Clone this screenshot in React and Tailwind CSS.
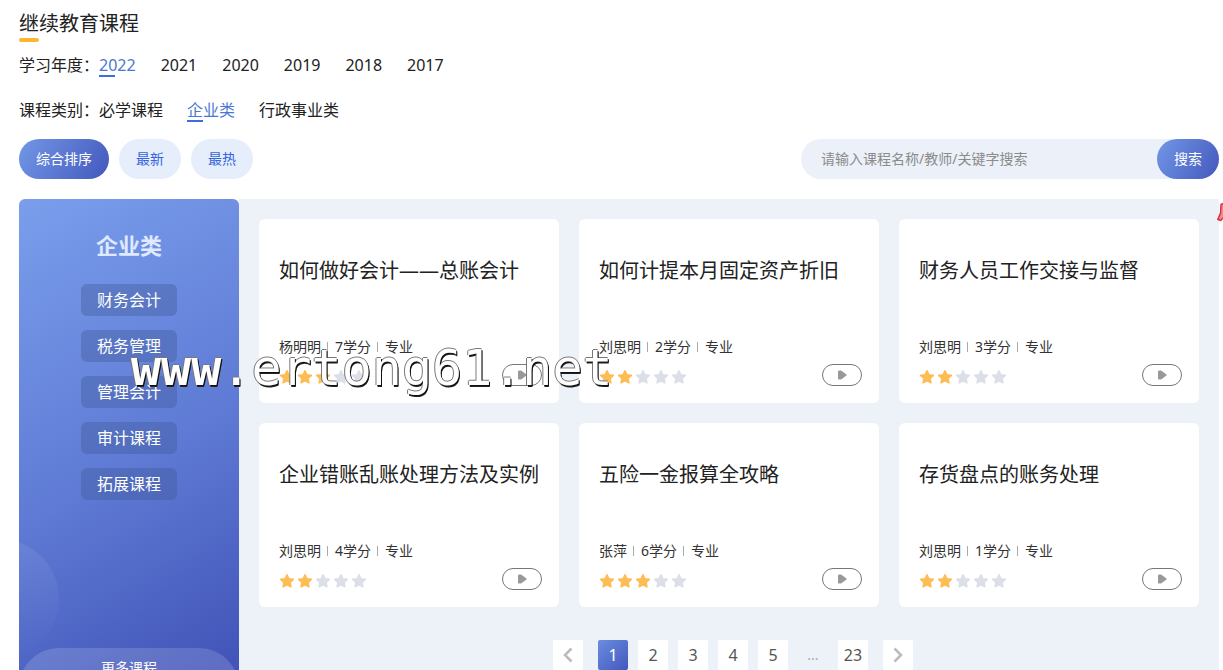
import React from "react";

const years = ["2022", "2021", "2020", "2019", "2018", "2017"];
const categories = ["必学课程", "企业类", "行政事业类"];
const sideItems = ["财务会计", "税务管理", "管理会计", "审计课程", "拓展课程"];
const courses = [
  { title: "如何做好会计——总账会计", teacher: "杨明明", credit: "7学分", stars: 3 },
  { title: "如何计提本月固定资产折旧", teacher: "刘思明", credit: "2学分", stars: 2 },
  { title: "财务人员工作交接与监督", teacher: "刘思明", credit: "3学分", stars: 2 },
  { title: "企业错账乱账处理方法及实例", teacher: "刘思明", credit: "4学分", stars: 2 },
  { title: "五险一金报算全攻略", teacher: "张萍", credit: "6学分", stars: 3 },
  { title: "存货盘点的账务处理", teacher: "刘思明", credit: "1学分", stars: 2 },
];

function Star({ on }) {
  return (
    <svg viewBox="0 0 16 16" className={on ? "size-4 text-[#fdbd55]" : "size-4 text-[#dcdfe7]"} fill="currentColor" stroke="currentColor" strokeWidth="1.6" strokeLinejoin="round" aria-hidden="true">
      <path d="M8 1.8l1.9 4 4.4.6-3.2 3 .8 4.4L8 11.7l-3.9 2.1.8-4.4-3.2-3 4.4-.6z" />
    </svg>
  );
}

function FilterRow({ label, items, active, gap }) {
  return (
    <div className="flex h-6 items-center text-base leading-6">
      <span>{label}</span>
      <nav className={gap}>
        {items.map((t) => (
          <a
            key={t}
            href="#"
            className={
              t === active
                ? "relative text-[#4a77d4] after:absolute after:bottom-0 after:left-0 after:h-0.5 after:w-4 after:bg-[#3f6de0]"
                : "relative"
            }
          >
            {t}
          </a>
        ))}
      </nav>
    </div>
  );
}

function Divider() {
  return <span className="mr-px h-2.5 w-px bg-[#aaaaaa]" />;
}

function Card({ course }) {
  return (
    <article className="flex h-46 flex-col rounded-md bg-white pt-9.5 pr-[17px] pl-5">
      <h3 className="text-xl leading-7 whitespace-nowrap">{course.title}</h3>
      <div className="mt-12.5 flex items-center gap-1.5 text-sm leading-6 text-[#333333]">
        <span>{course.teacher}</span>
        <Divider />
        <span>{course.credit}</span>
        <Divider />
        <span>专业</span>
      </div>
      <div className="mt-[5px] flex items-center justify-between">
        <div className="mt-1 flex gap-0.5">
          {[1, 2, 3, 4, 5].map((n) => (
            <Star key={n} on={n <= course.stars} />
          ))}
        </div>
        <button aria-label="播放" className="flex h-[22px] w-10 items-center justify-center rounded-full border border-[#777777]">
          <svg viewBox="0 0 10 10" className="size-2.5" fill="#999999" stroke="#999999" strokeWidth="2" strokeLinejoin="round">
            <path d="M2 1.5h1.8L8.6 5 3.8 8.5H2z" />
          </svg>
        </button>
      </div>
    </article>
  );
}

function PageButton({ children, active, label }) {
  return (
    <button
      aria-label={label}
      className={
        active
          ? "flex size-7.5 items-center justify-center rounded-xs bg-linear-135 from-[#6a8de0] to-[#4458bd] text-white"
          : "flex size-7.5 items-center justify-center rounded-xs bg-white"
      }
    >
      {children}
    </button>
  );
}

export default function App() {
  return (
    <div className="relative h-screen overflow-hidden bg-white pr-1 pl-[19px] font-['Noto_Sans','Noto_Sans_CJK_SC',sans-serif] text-[#222222]">
      <header>
        <h1 className="pt-2.5 text-xl leading-7">继续教育课程</h1>
        <div className="h-1 w-5 rounded-full bg-[#fdb62f]" />
        <div className="mt-[11px]">
          <FilterRow label="学习年度：" items={years} active="2022" gap="flex gap-[25px]" />
        </div>
        <div className="mt-[21px]">
          <FilterRow label="课程类别：" items={categories} active="企业类" gap="flex gap-6" />
        </div>
      </header>

      <div className="mt-[17px] flex h-10 items-center justify-between text-sm">
        <div className="flex gap-2.5">
          <button className="h-10 rounded-full bg-linear-120 from-[#7397e6] to-[#4458bd] px-[17px] text-white">综合排序</button>
          <button className="h-10 rounded-full bg-[#e6eefc] px-[17px] text-[#3565dd]">最新</button>
          <button className="h-10 rounded-full bg-[#e6eefc] px-[17px] text-[#3565dd]">最热</button>
        </div>
        <form className="flex h-10 w-[418px] rounded-full bg-[#ecf1f9]">
          <input
            aria-label="搜索课程"
            placeholder="请输入课程名称/教师/关键字搜索"
            className="min-w-0 flex-1 bg-transparent pl-5 outline-none placeholder:text-[#8b8b8b]"
          />
          <button type="button" className="rounded-full bg-linear-120 from-[#7397e6] to-[#4458bd] px-[17px] text-white">搜索</button>
        </form>
      </div>

      <main className="mt-5 flex h-[520px]">
        <aside className="relative flex w-55 shrink-0 flex-col items-center overflow-hidden rounded-md bg-linear-150 from-[#7a9eec] via-[#5f7bd5] via-50% to-[#4355b9] to-90% text-white">
          <span className="absolute top-[340px] -left-20 size-30 rounded-full bg-linear-to-b from-white/8 to-white/0" />
          <h2 className="mt-7 text-[22px] leading-9 font-bold text-[#dfe9ff]">企业类</h2>
          <ul className="mt-[21px] flex flex-col gap-3.5">
            {sideItems.map((t) => (
              <li key={t}>
                <a href="#" className="block h-8 rounded-md bg-[#415a9c]/40 px-4 text-base leading-8">{t}</a>
              </li>
            ))}
          </ul>
          <a href="#" className="absolute top-[449px] right-0 left-0 h-20 rounded-t-[40px] bg-white/15 pt-2 text-center text-sm leading-6">更多课程</a>
        </aside>

        <section className="min-w-0 flex-1 bg-[#edf2f9] p-5">
          <div className="grid grid-cols-3 gap-5">
            {courses.map((c) => (
              <Card key={c.title} course={c} />
            ))}
          </div>
          <nav aria-label="分页" className="mt-[33px] flex justify-center gap-2.5 pl-2 text-base text-[#555555]">
            <div className="mr-[5px]">
              <PageButton label="上一页">
                <svg viewBox="0 0 10 16" className="h-4 w-2.5" fill="none" stroke="#bbbbbb" strokeWidth="2.5"><path d="M8.5 1.5L2 8l6.5 6.5" /></svg>
              </PageButton>
            </div>
            <PageButton active>1</PageButton>
            <PageButton>2</PageButton>
            <PageButton>3</PageButton>
            <PageButton>4</PageButton>
            <PageButton>5</PageButton>
            <span className="w-7.5 text-center text-sm leading-7.5 text-[#aaaaaa]">...</span>
            <PageButton>23</PageButton>
            <div className="ml-[5px]">
              <PageButton label="下一页">
                <svg viewBox="0 0 10 16" className="h-4 w-2.5" fill="none" stroke="#bbbbbb" strokeWidth="2.5"><path d="M1.5 1.5L8 8l-6.5 6.5" /></svg>
              </PageButton>
            </div>
          </nav>
        </section>
      </main>

      <svg viewBox="0 0 6 20" className="absolute top-[202px] right-0 h-5 w-1.5" aria-hidden="true">
        <path d="M6 1.5L4 2.5 3.5 11 .8 17.5l3 1L6 16" fill="#f08a8f" stroke="#dd2a35" strokeWidth="1.4" />
      </svg>

      <div className="pointer-events-none absolute top-[338px] left-[131px] font-['DejaVu_Sans_Mono',monospace] text-[50px] leading-[60px] text-white [text-shadow:1px_1px_0_#111,-1px_0_0_#777,0_-1px_0_#777,1px_2px_0_#222]">
        <b>www</b>.ertong61.net
      </div>
    </div>
  );
}
